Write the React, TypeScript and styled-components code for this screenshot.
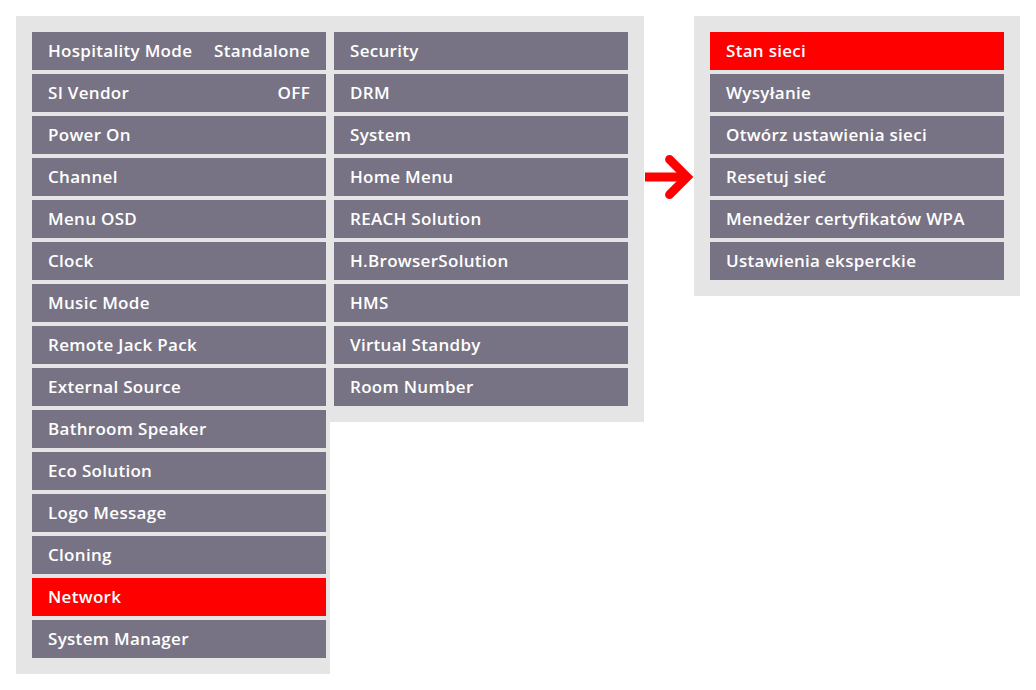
import styled, { createGlobalStyle } from 'styled-components';

const GlobalStyle = createGlobalStyle`
  body {
    margin: 0;
    background: #ffffff;
    font-family: "Open Sans", "Liberation Sans", sans-serif;
  }
`;

type Item = { label: string; value?: string; active?: boolean };

const hotelMenu: Item[] = [
  { label: 'Hospitality Mode', value: 'Standalone' },
  { label: 'SI Vendor', value: 'OFF' },
  { label: 'Power On' },
  { label: 'Channel' },
  { label: 'Menu OSD' },
  { label: 'Clock' },
  { label: 'Music Mode' },
  { label: 'Remote Jack Pack' },
  { label: 'External Source' },
  { label: 'Bathroom Speaker' },
  { label: 'Eco Solution' },
  { label: 'Logo Message' },
  { label: 'Cloning' },
  { label: 'Network', active: true },
  { label: 'System Manager' },
];

const moreMenu: Item[] = [
  { label: 'Security' },
  { label: 'DRM' },
  { label: 'System' },
  { label: 'Home Menu' },
  { label: 'REACH Solution' },
  { label: 'H.BrowserSolution' },
  { label: 'HMS' },
  { label: 'Virtual Standby' },
  { label: 'Room Number' },
];

const networkMenu: Item[] = [
  { label: 'Stan sieci', active: true },
  { label: 'Wysyłanie' },
  { label: 'Otwórz ustawienia sieci' },
  { label: 'Resetuj sieć' },
  { label: 'Menedżer certyfikatów WPA' },
  { label: 'Ustawienia eksperckie' },
];

const App = () => {
  const renderItems = (items: Item[]) =>
    items.map((item) => (
      <MenuItem key={item.label} $active={item.active}>
        <span>{item.label}</span>
        {item.value && <span>{item.value}</span>}
      </MenuItem>
    ));

  return (
    <>
      <GlobalStyle />
      <Page>
        <MainMenu>
          <Column $side="left">{renderItems(hotelMenu)}</Column>
          <Column $side="right">{renderItems(moreMenu)}</Column>
        </MainMenu>
        <ArrowBox>
          <svg width="50" height="48" viewBox="0 0 50 48">
            <path d="M0 23 H42" stroke="#ff0000" strokeWidth="9" fill="none" />
            <path
              d="M25 5 L43 23 L25 41"
              stroke="#ff0000"
              strokeWidth="9"
              strokeLinecap="round"
              strokeLinejoin="miter"
              fill="none"
            />
          </svg>
        </ArrowBox>
        <SubMenu>{renderItems(networkMenu)}</SubMenu>
      </Page>
    </>
  );
};

const Page = styled.div`
  display: flex;
  align-items: flex-start;
  padding: 16px;
`;

const MainMenu = styled.div`
  display: flex;
  align-items: flex-start;
`;

const Column = styled.div<{ $side: 'left' | 'right' }>`
  display: flex;
  flex-direction: column;
  gap: 4px;
  width: 294px;
  background-color: #e5e5e5;
  padding: ${(p) => (p.$side === 'left' ? '16px 4px 16px 16px' : '16px 16px 16px 4px')};
`;

const SubMenu = styled.div`
  display: flex;
  flex-direction: column;
  gap: 4px;
  width: 294px;
  background-color: #e5e5e5;
  padding: 16px;
`;

const ArrowBox = styled.div`
  width: 50px;
  height: 48px;
  margin-top: 138px;
  display: flex;
  justify-content: flex-start;

  svg {
    display: block;
    margin-left: 1px;
  }
`;

const MenuItem = styled.div<{ $active?: boolean }>`
  display: flex;
  align-items: center;
  justify-content: space-between;
  box-sizing: border-box;
  height: 38px;
  padding: 0 16px 2px;
  background-color: ${(p) => (p.$active ? '#ff0000' : '#777384')};
  color: #ffffff;
  font-size: 17px;
  font-weight: 600;
  letter-spacing: 0.3px;
  white-space: nowrap;
`;

export default App;
